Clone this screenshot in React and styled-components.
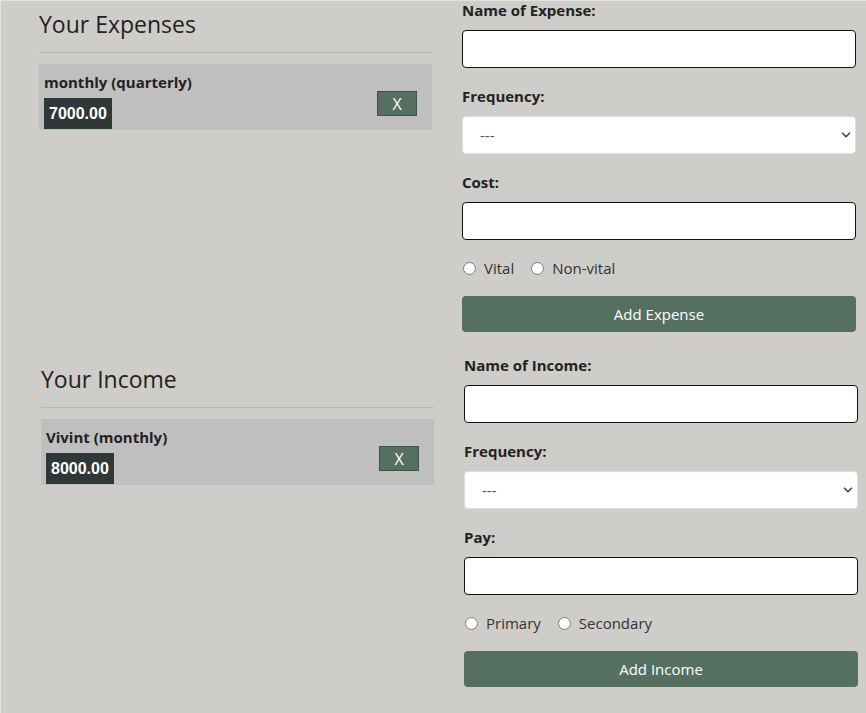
import React from 'react';
import styled, { createGlobalStyle } from 'styled-components';
import { ChevronDown } from 'lucide-react';

const GlobalStyle = createGlobalStyle`
    html, body {
        margin: 0;
        padding: 0;
        background: #cecdc9;
    }
    body {
        font-family: "Open Sans", "Noto Sans", sans-serif;
        color: #212529;
    }
`

const sections = [
    {
        title: 'Your Expenses',
        shift: 0,
        items: [{ id: 1, name: 'monthly (quarterly)', amount: '7000.00' }],
        nameLabel: 'Name of Expense:',
        amountLabel: 'Cost:',
        kinds: ['Vital', 'Non-vital'],
        action: 'Add Expense',
    },
    {
        title: 'Your Income',
        shift: 2,
        items: [{ id: 2, name: 'Vivint (monthly)', amount: '8000.00' }],
        nameLabel: 'Name of Income:',
        amountLabel: 'Pay:',
        kinds: ['Primary', 'Secondary'],
        action: 'Add Income',
    },
]

const Entry = ({ name, amount }) => (
    <Card>
        <div>
            <CardTitle>{name}</CardTitle>
            <Amount>{amount}</Amount>
        </div>
        <RemoveButton>X</RemoveButton>
    </Card>
)

const Section = ({ data }) => (
    <Row $shift={data.shift}>
        <ListColumn>
            <Heading>{data.title}</Heading>
            <Rule />
            {data.items.map(item => <Entry key={item.id} {...item} />)}
        </ListColumn>
        <Form onSubmit={e => e.preventDefault()}>
            <Label>{data.nameLabel}</Label>
            <TextInput type="text" />
            <Label>Frequency:</Label>
            <SelectWrap>
                <Select defaultValue="">
                    <option value="">---</option>
                    <option value="monthly">monthly</option>
                    <option value="quarterly">quarterly</option>
                </Select>
                <Chevron size={14} strokeWidth={3} />
            </SelectWrap>
            <Label>{data.amountLabel}</Label>
            <TextInput type="text" />
            <RadioRow>
                {data.kinds.map(kind => (
                    <RadioLabel key={kind}>
                        <Radio type="radio" name={data.title} />
                        {kind}
                    </RadioLabel>
                ))}
            </RadioRow>
            <SubmitButton type="submit">{data.action}</SubmitButton>
        </Form>
    </Row>
)

const App = () => (
    <Page>
        <GlobalStyle />
        {sections.map(s => <Section key={s.title} data={s} />)}
    </Page>
)

export default App;

const Page = styled.div`
    min-height: 713px;
    box-sizing: border-box;
    border-top: 1px solid #e4e3e0;
    border-left: 1px solid #e4e3e0;
`

const Row = styled.div`
    display: grid;
    grid-template-columns: 393px 394px;
    column-gap: 30px;
    padding-left: ${p => 38 + p.$shift}px;
    height: 355px;
`

const ListColumn = styled.div`
    padding-top: 7px;
`

const Heading = styled.h2`
    margin: 0;
    font-size: 23px;
    line-height: 32px;
    font-weight: 400;
    color: #222;
`

const Rule = styled.div`
    height: 1px;
    background: #b9b8b5;
    margin: 12px 0 11px;
`

const Card = styled.div`
    display: flex;
    justify-content: space-between;
    align-items: flex-end;
    background: #bfbfbf;
    padding: 8px 15px 1px 5px;
`

const CardTitle = styled.div`
    font-size: 15px;
    font-weight: 700;
    line-height: 20px;
    color: #222;
`

const Amount = styled.div`
    width: fit-content;
    margin-top: 6px;
    padding: 5px 5px;
    line-height: 21px;
    background: #2f3739;
    color: #fff;
    font-family: "Liberation Sans", Arial, sans-serif;
    font-weight: 700;
    font-size: 16px;
`

const RemoveButton = styled.button`
    width: 40px;
    height: 25px;
    margin-bottom: 13px;
    padding: 0;
    background: #557060;
    border: 1px solid #3c5545;
    color: #fff;
    font-family: "Open Sans", sans-serif;
    font-size: 16px;
    line-height: 1;
`

const Form = styled.form`
    display: flex;
    flex-direction: column;
`

const Label = styled.label`
    display: block;
    font-size: 15px;
    font-weight: 700;
    line-height: 20px;
    margin: -1px 0 10px;
    color: #222;
`

const TextInput = styled.input`
    box-sizing: border-box;
    height: 38px;
    width: 100%;
    border: 1px solid #111;
    border-radius: 4px;
    background: #fff;
    margin: 0 0 19px;
    padding: 0 12px;
    font-size: 15px;
`

const SelectWrap = styled.div`
    position: relative;
    margin-bottom: 19px;
`

const Select = styled.select`
    box-sizing: border-box;
    appearance: none;
    width: 100%;
    height: 38px;
    border: 1px solid #dedede;
    border-radius: 4px;
    background: #fff;
    padding: 0 30px 0 17px;
    font-family: "Open Sans", sans-serif;
    font-size: 15px;
    color: #555;
`

const Chevron = styled(ChevronDown)`
    position: absolute;
    right: 3px;
    top: 12px;
    color: #4a4a4a;
    pointer-events: none;
`

const RadioRow = styled.div`
    display: flex;
    gap: 16px;
    height: 20px;
    align-items: center;
    margin: -1px 0 18px;
`

const RadioLabel = styled.label`
    display: inline-flex;
    align-items: center;
    gap: 8px;
    font-size: 15px;
    color: #333;
`

const Radio = styled.input`
    margin: 0 0 0 1px;
    width: 13px;
    height: 13px;
`

const SubmitButton = styled.button`
    height: 36px;
    width: 100%;
    border: none;
    border-radius: 4px;
    background: #557060;
    color: #fff;
    font-family: "Open Sans", sans-serif;
    font-size: 15px;
`
